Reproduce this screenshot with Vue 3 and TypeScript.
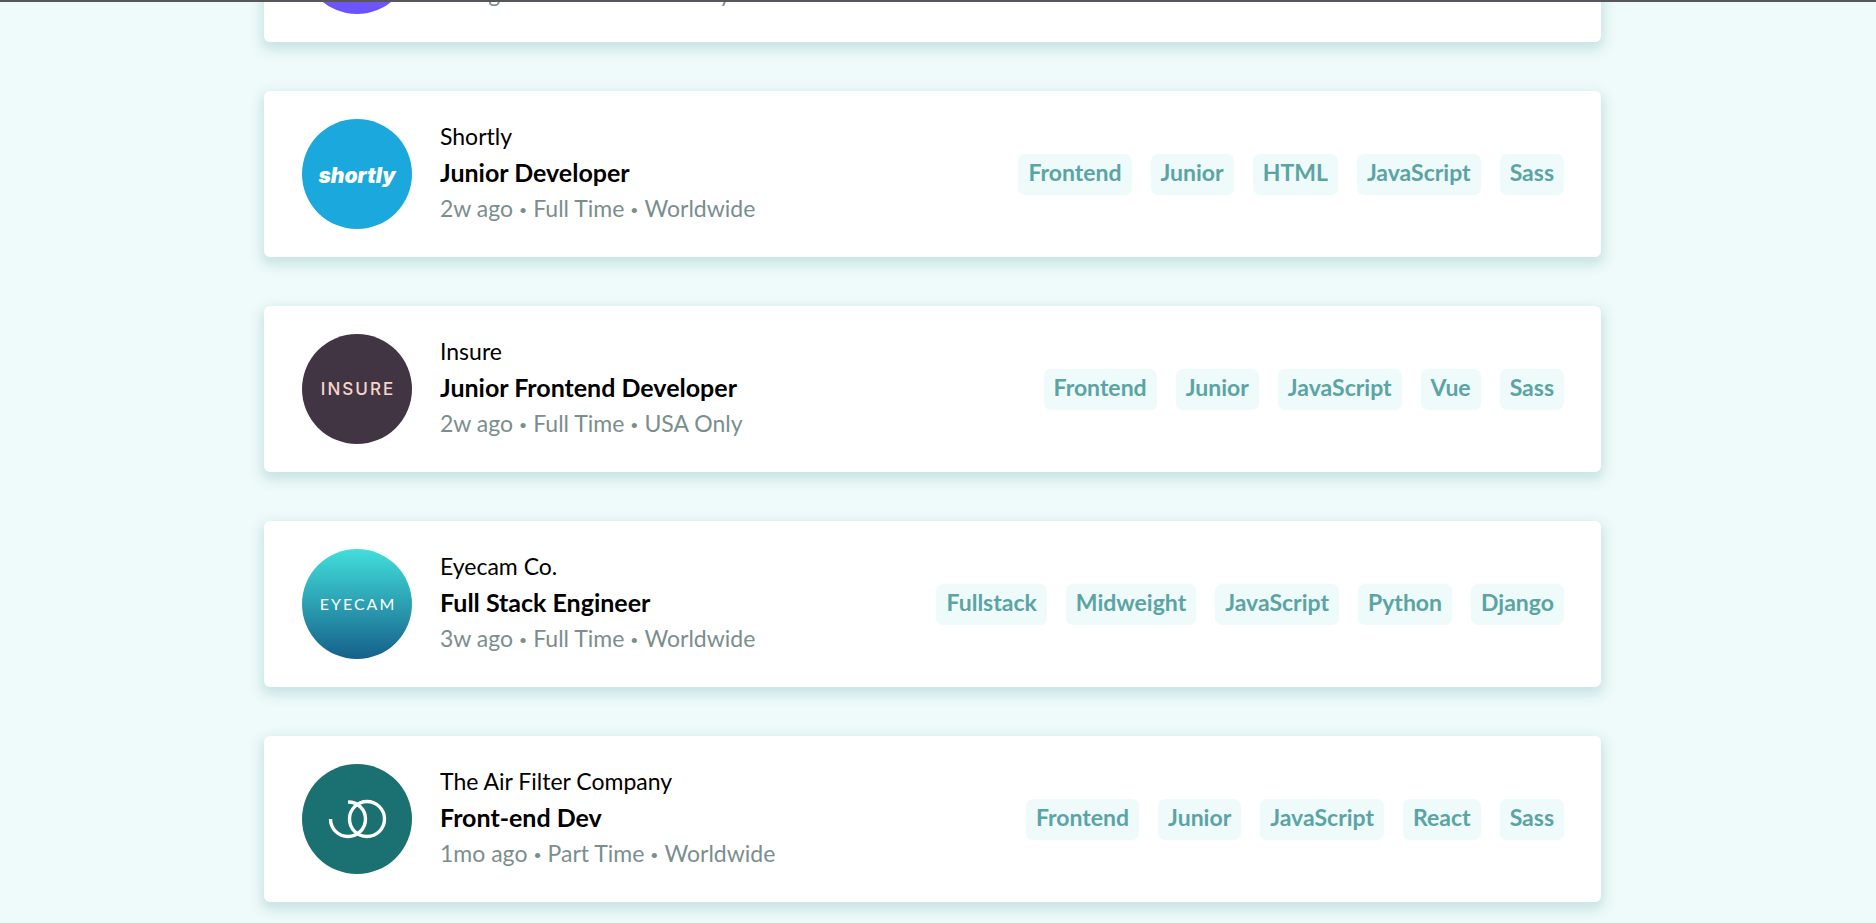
<script setup lang="ts">
interface Job {
  id: string
  company: string
  position: string
  meta: string[]
  tags: string[]
}

const jobs: Job[] = [
  {
    id: 'faceit',
    company: 'FaceIt',
    position: 'Junior Backend Developer',
    meta: ['2w ago', 'Full Time', 'UK Only'],
    tags: ['Backend', 'Junior', 'Ruby', 'RoR'],
  },
  {
    id: 'shortly',
    company: 'Shortly',
    position: 'Junior Developer',
    meta: ['2w ago', 'Full Time', 'Worldwide'],
    tags: ['Frontend', 'Junior', 'HTML', 'JavaScript', 'Sass'],
  },
  {
    id: 'insure',
    company: 'Insure',
    position: 'Junior Frontend Developer',
    meta: ['2w ago', 'Full Time', 'USA Only'],
    tags: ['Frontend', 'Junior', 'JavaScript', 'Vue', 'Sass'],
  },
  {
    id: 'eyecam',
    company: 'Eyecam Co.',
    position: 'Full Stack Engineer',
    meta: ['3w ago', 'Full Time', 'Worldwide'],
    tags: ['Fullstack', 'Midweight', 'JavaScript', 'Python', 'Django'],
  },
  {
    id: 'air',
    company: 'The Air Filter Company',
    position: 'Front-end Dev',
    meta: ['1mo ago', 'Part Time', 'Worldwide'],
    tags: ['Frontend', 'Junior', 'JavaScript', 'React', 'Sass'],
  },
]
</script>

<template>
  <div class="page">
    <div class="topbar"></div>
    <main class="list">
      <article v-for="job in jobs" :key="job.id" class="card">
        <svg class="logo" viewBox="0 0 110 110" aria-hidden="true">
          <defs>
            <linearGradient id="grad-faceit" x1="0" y1="0" x2="0" y2="1">
              <stop offset="0" stop-color="#b45cf5" />
              <stop offset="1" stop-color="#6655fa" />
            </linearGradient>
            <linearGradient id="grad-eyecam" x1="0" y1="0" x2="0" y2="1">
              <stop offset="0" stop-color="#42dfdb" />
              <stop offset="1" stop-color="#15608a" />
            </linearGradient>
          </defs>
          <circle cx="55" cy="55" r="55" :class="'disc-' + job.id" />
          <text v-if="job.id === 'shortly'" x="55" y="64" class="word-shortly">shortly</text>
          <text v-else-if="job.id === 'insure'" x="56" y="61" class="word-insure">INSURE</text>
          <text v-else-if="job.id === 'eyecam'" x="56" y="61" class="word-eyecam">EYECAM</text>
          <g v-else-if="job.id === 'air'" fill="none" stroke="#fff" stroke-width="3.4">
            <circle cx="65" cy="55" r="17.5" />
            <path d="M28.5 55A17.5 17.5 0 0 0 46 72.5C56 72.5 63.5 64.5 63.5 55S56 38 46 38" />
          </g>
        </svg>
        <div class="info">
          <p class="company">{{ job.company }}</p>
          <h2 class="position">{{ job.position }}</h2>
          <p class="meta">
            <template v-for="(item, i) in job.meta" :key="item">
              <span v-if="i > 0" class="dot">•</span>{{ item }}
            </template>
          </p>
        </div>
        <div class="tags">
          <button v-for="tag in job.tags" :key="tag" type="button" class="tag">{{ tag }}</button>
        </div>
      </article>
    </main>
  </div>
</template>

<style>
body {
  margin: 0;
  background: #effafa;
}
</style>

<style scoped>
.page {
  position: relative;
  height: 100vh;
  overflow: hidden;
  background: #effafa;
  font-family: Lato, "Liberation Sans", sans-serif;
}

.topbar {
  position: absolute;
  inset: 0 0 auto;
  height: 2px;
  background: #58565c;
}

.list {
  display: flex;
  flex-direction: column;
  gap: 49px;
  margin-top: -124px;
  padding: 0 275px 0 264px;
}

.card {
  display: flex;
  align-items: center;
  padding: 28px 37px 28px 38px;
  border-radius: 6px;
  background: #fff;
  box-shadow: 0 5px 12px 3px #c9e4e4;
}

.logo {
  flex: none;
  width: 110px;
  height: 110px;
  margin-right: 28px;
}

.disc-faceit { fill: url(#grad-faceit); }
.disc-shortly { fill: #1ba8dc; }
.disc-insure { fill: #413544; }
.disc-eyecam { fill: url(#grad-eyecam); }
.disc-air { fill: #1b7071; }

.word-shortly,
.word-insure,
.word-eyecam {
  fill: #fff;
  text-anchor: middle;
}

.word-shortly {
  font: italic 900 21px Inter, sans-serif;
}

.word-insure {
  fill: #f9d5c9;
  font: 500 17px Inter, sans-serif;
  letter-spacing: 2px;
}

.word-eyecam {
  font: 16px Lato, sans-serif;
  letter-spacing: 2px;
}

.info {
  flex: 1;
  margin-top: -4px;
  line-height: 36px;
}

.company,
.position,
.meta {
  margin: 0;
  font-size: 23px;
  font-weight: 400;
}

.company,
.position {
  color: #000;
}

.position {
  font-size: 25px;
  font-weight: 700;
}

.meta {
  color: #7b8e8e;
}

.dot {
  margin: 0 6px;
  font-size: 14px;
  line-height: 1;
  vertical-align: 2px;
}

.tags {
  display: flex;
  gap: 19px;
}

.tag {
  padding: 5px 10px 10px;
  border: 0;
  border-radius: 7px;
  background: #effafa;
  color: #5ba4a4;
  font-family: inherit;
  font-size: 23px;
  font-weight: 700;
  line-height: 26px;
  cursor: pointer;
}
</style>
